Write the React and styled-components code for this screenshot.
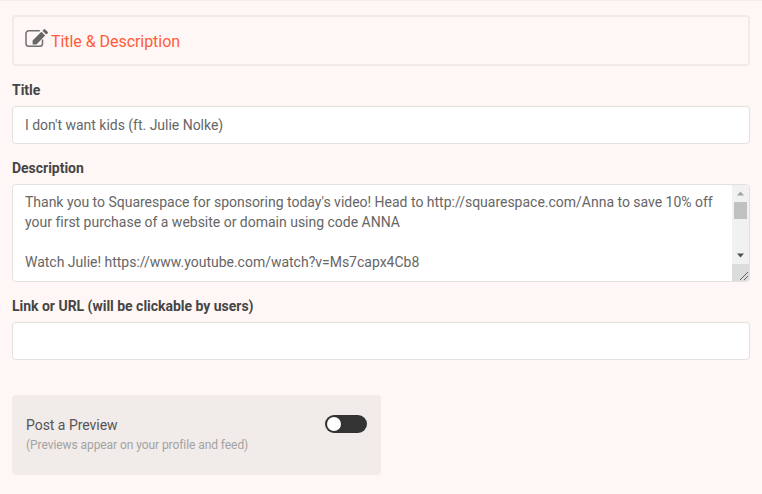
import React from "react";
import styled, { createGlobalStyle } from "styled-components";

const Global = createGlobalStyle`
  html, body { margin: 0; padding: 0; background: #fff7f5; }
  * { box-sizing: border-box; }
  body { font-family: Roboto, "Liberation Sans", sans-serif; }
`;

const Page = styled.div`
  width: 762px;
  height: 494px;
  overflow: hidden;
  background: #fff7f5;
  border-top: 1px solid #f8ece9;
  padding: 14px 12px 0;
  display: flex;
  flex-direction: column;
`;

const Header = styled.div`
  height: 51px;
  border: 2px solid #f3e9e6;
  border-radius: 4px;
  padding: 2px 12px 0 11px;
  display: flex;
  align-items: center;
  gap: 3px;
  color: #ff5c39;
  font-size: 16px;
  letter-spacing: -0.05px;
`;

const HeaderIcon = styled.svg`
  width: 23px;
  height: 20px;
  margin-top: -8px;
  flex: none;
`;

const Label = styled.label`
  display: block;
  margin-top: ${(p) => p.$top}px;
  height: 16px;
  line-height: 16px;
  font-size: 14px;
  font-weight: 700;
  letter-spacing: -0.02px;
  color: #454545;
`;

const Input = styled.input`
  display: block;
  width: 100%;
  height: 38px;
  margin-top: 8px;
  border: 1px solid #e3e1e0;
  border-radius: 4px;
  background: #fff;
  padding: 0 12px;
  font: 400 14px Roboto, sans-serif;
  letter-spacing: -0.02px;
  color: #666;
  outline: none;
`;

const AreaBox = styled.div`
  height: 98px;
  margin-top: 8px;
  border: 1px solid #e3e1e0;
  border-radius: 4px;
  background: #fff;
  display: flex;
  overflow: hidden;
`;

const AreaText = styled.textarea`
  flex: 1;
  min-width: 0;
  border: 0;
  outline: none;
  resize: none;
  overflow: hidden;
  padding: 7px 12px;
  font: 400 14px/20px Roboto, sans-serif;
  letter-spacing: -0.01px;
  color: #666;
  background: transparent;
`;

const Scrollbar = styled.div`
  width: 17px;
  flex: none;
  background: #f1f1f1;
  display: flex;
  flex-direction: column;
  align-items: center;
`;

const Arrow = styled.svg`
  width: 17px;
  height: 17px;
  flex: none;
`;

const Thumb = styled.div`
  width: 13px;
  height: 17px;
  background: #c1c1c1;
`;

const Track = styled.div`
  flex: 1;
`;

const Corner = styled.svg`
  width: 17px;
  height: 17px;
  flex: none;
  background: #dcdcdc;
`;

const PreviewCard = styled.div`
  width: 369px;
  height: 80px;
  margin-top: 35px;
  background: #f1ebe9;
  border-radius: 4px;
  padding: 0 14px;
  display: flex;
  align-items: center;
  justify-content: space-between;
`;

const PreviewText = styled.div`
  display: flex;
  flex-direction: column;
  gap: 5px;
  margin-top: -1px;
`;

const PreviewTitle = styled.div`
  font-size: 14px;
  line-height: 16px;
  letter-spacing: -0.03px;
  color: #555;
`;

const PreviewHint = styled.div`
  font-size: 12px;
  line-height: 14px;
  letter-spacing: -0.07px;
  color: #a3a3a3;
`;

const Toggle = styled.div`
  width: 42px;
  height: 18px;
  border-radius: 9px;
  background: #333;
  padding: 2px;
  margin-top: -22px;
  flex: none;
`;

const Knob = styled.div`
  width: 14px;
  height: 14px;
  border-radius: 50%;
  background: #fff;
`;

const description = `Thank you to Squarespace for sponsoring today's video! Head to http://squarespace.com/Anna to save 10% off your first purchase of a website or domain using code ANNA

Watch Julie! https://www.youtube.com/watch?v=Ms7capx4Cb8`;

export default function App() {
  return (
    <>
      <Global />
      <Page>
        <Header>
          <HeaderIcon viewBox="0 0 23 20" fill="none">
            <path d="M17.5 11.5V15.5a2.8 2.8 0 0 1-2.8 2.8H3.8A2.8 2.8 0 0 1 1 15.5V5.5a2.8 2.8 0 0 1 2.8-2.8h11" stroke="#707070" strokeWidth="1.5" />
            <path d="M7.6 12.6 16.4 3.8l3.8 3.8-8.8 8.8H7.6z" fill="#666" />
            <path d="M17.4 2.8 18.8 1.4a1 1 0 0 1 1.4 0l2.4 2.4a1 1 0 0 1 0 1.4l-1.4 1.4z" fill="#666" />
          </HeaderIcon>
          Title &amp; Description
        </Header>
        <Label $top={16}>Title</Label>
        <Input defaultValue="I don't want kids (ft. Julie Nolke)" />
        <Label $top={16}>Description</Label>
        <AreaBox>
          <AreaText defaultValue={description} />
          <Scrollbar>
            <Arrow viewBox="0 0 17 17"><path d="M5 10.5h7L8.5 6.5z" fill="#a3a3a3" /></Arrow>
            <Thumb />
            <Track />
            <Arrow viewBox="0 0 17 17"><path d="M5 6.5h7l-3.5 4z" fill="#505050" /></Arrow>
            <Corner viewBox="0 0 17 17">
              <path d="M8 16 16 8M12 16l4-4" stroke="#666" strokeWidth="1" />
            </Corner>
          </Scrollbar>
        </AreaBox>
        <Label $top={16}>Link or URL (will be clickable by users)</Label>
        <Input />
        <PreviewCard>
          <PreviewText>
            <PreviewTitle>Post a Preview</PreviewTitle>
            <PreviewHint>(Previews appear on your profile and feed)</PreviewHint>
          </PreviewText>
          <Toggle><Knob /></Toggle>
        </PreviewCard>
      </Page>
    </>
  );
}
